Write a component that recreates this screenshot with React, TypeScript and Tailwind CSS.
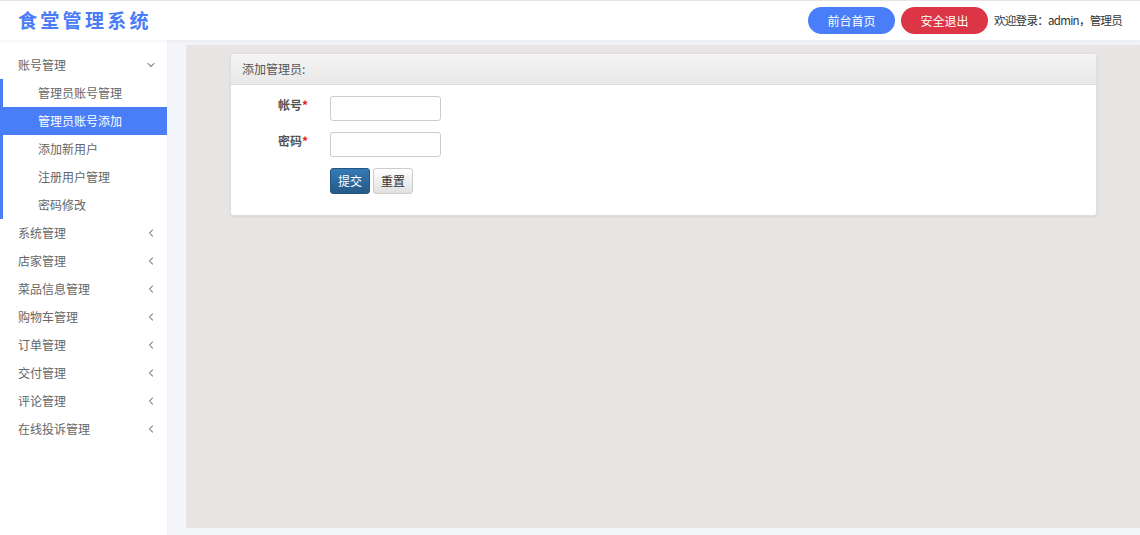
import { ChevronDown, ChevronLeft } from "lucide-react";

const font = { fontFamily: '"Noto Sans CJK SC", "Noto Sans", sans-serif' };

const subItems = ["管理员账号管理", "管理员账号添加", "添加新用户", "注册用户管理", "密码修改"];
const menus = ["系统管理", "店家管理", "菜品信息管理", "购物车管理", "订单管理", "交付管理", "评论管理", "在线投诉管理"];

function Header() {
  return (
    <div className="h-10 flex items-center border-t border-[#e5e5e5] bg-white shadow-[0_2px_4px_rgba(0,0,0,0.04)] relative z-10">
      <div className="pl-[18px] text-[19px] font-bold tracking-[3.3px] text-[#4a7cf8]">食堂管理系统</div>
      <div className="ml-auto flex items-center pr-[18px]">
        <button className="w-[87px] h-[27px] rounded-full bg-[#4a7ef8] text-white text-[12px]">前台首页</button>
        <button className="ml-[6px] w-[87px] h-[27px] rounded-full bg-[#dc3545] text-white text-[12px]">安全退出</button>
        <span className="ml-[6px] w-[128px] whitespace-nowrap text-[11.5px] tracking-[-0.7px] text-[#333]">
          欢迎登录：admin，管理员
        </span>
      </div>
    </div>
  );
}

function Sidebar() {
  return (
    <div className="w-[167px] shrink-0 bg-white pt-[11px] text-[12px] text-[#666]">
      <div className="h-7 flex items-center pl-[18px] pr-[10px]">
        <span>账号管理</span>
        <ChevronDown className="ml-auto w-3 h-3 text-[#999]" strokeWidth={2.5} />
      </div>
      <div className="border-l-[3px] border-[#4a7ef8]">
        {subItems.map((s, i) => (
          <div
            key={s}
            className={
              "h-7 flex items-center pl-[35px] " +
              (i === 1 ? "bg-[#4a7ef8] text-white" : "")
            }
          >
            {s}
          </div>
        ))}
      </div>
      {menus.map((m) => (
        <div key={m} className="h-7 flex items-center pl-[18px] pr-[10px]">
          <span>{m}</span>
          <ChevronLeft className="ml-auto w-3 h-3 text-[#999]" strokeWidth={2.5} />
        </div>
      ))}
    </div>
  );
}

function Field({ label }: { label: string }) {
  return (
    <div className="flex items-center">
      <div className="w-[99px] text-right text-[12px] font-bold text-[#555] pr-[22px] -mt-[8px]">
        {label}
        <span className="text-[#e02020]">*</span>
      </div>
      <input className="w-[111px] h-[25px] border border-[#ccc] rounded-[3px] bg-white outline-none" />
    </div>
  );
}

export default function App() {
  return (
    <div className="h-[535px] flex flex-col bg-[#f4f5f8] overflow-hidden" style={font}>
      <Header />
      <div className="flex flex-1 min-h-0">
        <Sidebar />
        <div className="flex-1 pl-[19px] pt-[5px] pb-[7px]">
          <div className="h-full bg-[#e9e4e4] pt-[8px] pl-[44px] pr-[43px]">
            <div className="bg-white rounded-[3px] shadow-[0_1px_2px_rgba(0,0,0,0.08)] border border-[#dedede]">
              <div className="h-[31px] flex items-center pl-[11px] text-[12px] text-[#555] bg-gradient-to-b from-[#f5f5f5] to-[#e8e8e8] border-b border-[#ddd] rounded-t-[3px]">
                添加管理员:
              </div>
              <div className="pt-[11px] pb-[21px] flex flex-col gap-[11px]">
                <Field label="帐号" />
                <Field label="密码" />
                <div className="flex pl-[99px] gap-[3px]">
                  <button className="w-10 h-[26px] rounded-[3px] text-white text-[12px] bg-gradient-to-b from-[#337ab7] to-[#265a88] border border-[#245580]">
                    提交
                  </button>
                  <button className="w-10 h-[26px] rounded-[3px] text-[#333] text-[12px] bg-gradient-to-b from-white to-[#e0e0e0] border border-[#ccc]">
                    重置
                  </button>
                </div>
              </div>
            </div>
          </div>
        </div>
      </div>
    </div>
  );
}
